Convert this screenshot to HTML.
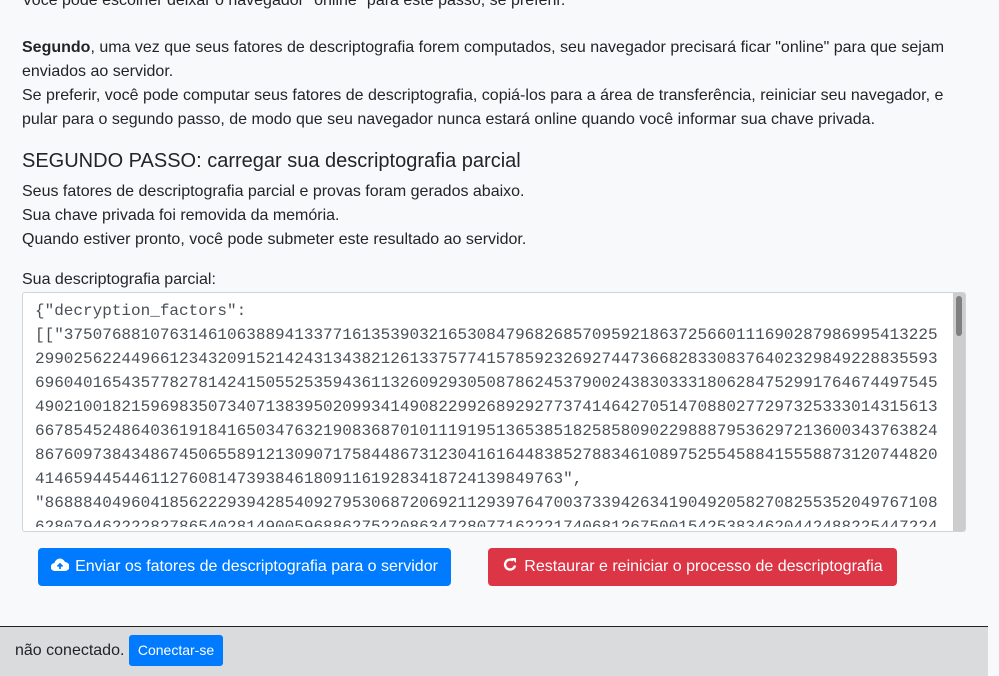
<!DOCTYPE html>
<html><head><meta charset="utf-8"><style>
body{margin:0;background:#f8f9fa;font-family:"Liberation Sans",sans-serif;color:#212529;width:999px;height:675px;overflow:hidden;position:relative;font-size:16px;line-height:24px}
.p{position:absolute;left:22px;margin:0}
.ta{position:absolute;left:22px;top:292px;width:942px;height:238px;border:1px solid #ced4da;border-radius:3px;background:#fff;overflow:hidden}
.clip{position:absolute;left:0;top:0;width:930px;height:234px;overflow:hidden}
.ta pre{margin:0;position:absolute;left:12px;top:6px;font-family:"Liberation Mono",monospace;font-size:16px;line-height:24px;color:#495057}
.sb{position:absolute;right:0;top:0;width:12px;height:238px;background:#cdcdcd}
.sb div{position:absolute;left:3px;top:3px;width:6px;height:40px;background:#7f7f7f;border-radius:3px}
.btn{position:absolute;top:548px;height:38px;color:#fff;border-radius:4px;font-size:16px;line-height:38px;text-align:center}
.foot{position:absolute;left:0;top:626px;width:988px;height:49px;background:#dadbdd;border-top:1px solid #222}
</style></head><body>
<p class="p" style="top:-11px">Você pode escolher deixar o navegador "online" para este passo, se preferir.</p>
<p class="p" style="top:36px;width:950px"><b>Segundo</b>, uma vez que seus fatores de descriptografia forem computados, seu navegador precisará ficar "online" para que sejam enviados ao servidor.<br>Se preferir, você pode computar seus fatores de descriptografia, copiá-los para a área de transferência, reiniciar seu navegador, e pular para o segundo passo, de modo que seu navegador nunca estará online quando você informar sua chave privada.</p>
<p class="p" style="top:148px;font-size:20px;line-height:26px">SEGUNDO PASSO: carregar sua descriptografia parcial</p>
<p class="p" style="top:180px">Seus fatores de descriptografia parcial e provas foram gerados abaixo.<br>Sua chave privada foi removida da memória.<br>Quando estiver pronto, você pode submeter este resultado ao servidor.</p>
<p class="p" style="top:268px">Sua descriptografia parcial:</p>
<div class="ta"><div class="clip"><pre>{"decryption_factors":
[["3750768810763146106388941337716135390321653084796826857095921863725660111690287986995413225
2990256224496612343209152142431343821261337577415785923269274473668283308376402329849228835593
6960401654357782781424150552535943611326092930508786245379002438303331806284752991764674497545
4902100182159698350734071383950209934149082299268929277374146427051470880277297325333014315613
6678545248640361918416503476321908368701011191951365385182585809022988879536297213600343763824
8676097384348674506558912130907175844867312304161644838527883461089752554588415558873120744820
4146594454461127608147393846180911619283418724139849763",
"868884049604185622293942854092795306872069211293976470037339426341904920582708255352049767108
6280794622228278654028149005968862752208634728077162221740681267500154253834620442488225447224</pre></div><div class="sb"><div></div></div></div>
<div class="btn" style="left:38px;width:413px;background:#007bff"><svg width="18" height="16" viewBox="0 0 18 16" style="vertical-align:-2px;margin-right:6px"><path d="M4 14a4 4 0 0 1-.5-8A5.5 5.5 0 0 1 14 5a4.5 4.5 0 0 1 0 9z" fill="#fff"/><path d="M9 12V7M6.5 9.5L9 7l2.5 2.5" stroke="#007bff" stroke-width="1.8" fill="none"/></svg>Enviar os fatores de descriptografia para o servidor</div>
<div class="btn" style="left:488px;width:409px;background:#dc3545"><svg width="16" height="16" viewBox="0 0 16 16" style="vertical-align:-2px;margin-right:6px"><path d="M13 8.5A5 5 0 1 1 11 3.5" stroke="#fff" stroke-width="2.4" fill="none"/><path d="M9 1h5v5z" fill="#fff"/></svg>Restaurar e reiniciar o processo de descriptografia</div>
<div class="foot"><span style="position:absolute;left:15px;top:12px">não conectado.</span><span style="position:absolute;left:129px;top:8px;width:94px;height:31px;background:#007bff;color:#fff;border-radius:3px;font-size:14px;line-height:31px;text-align:center">Conectar-se</span></div>
</body></html>
